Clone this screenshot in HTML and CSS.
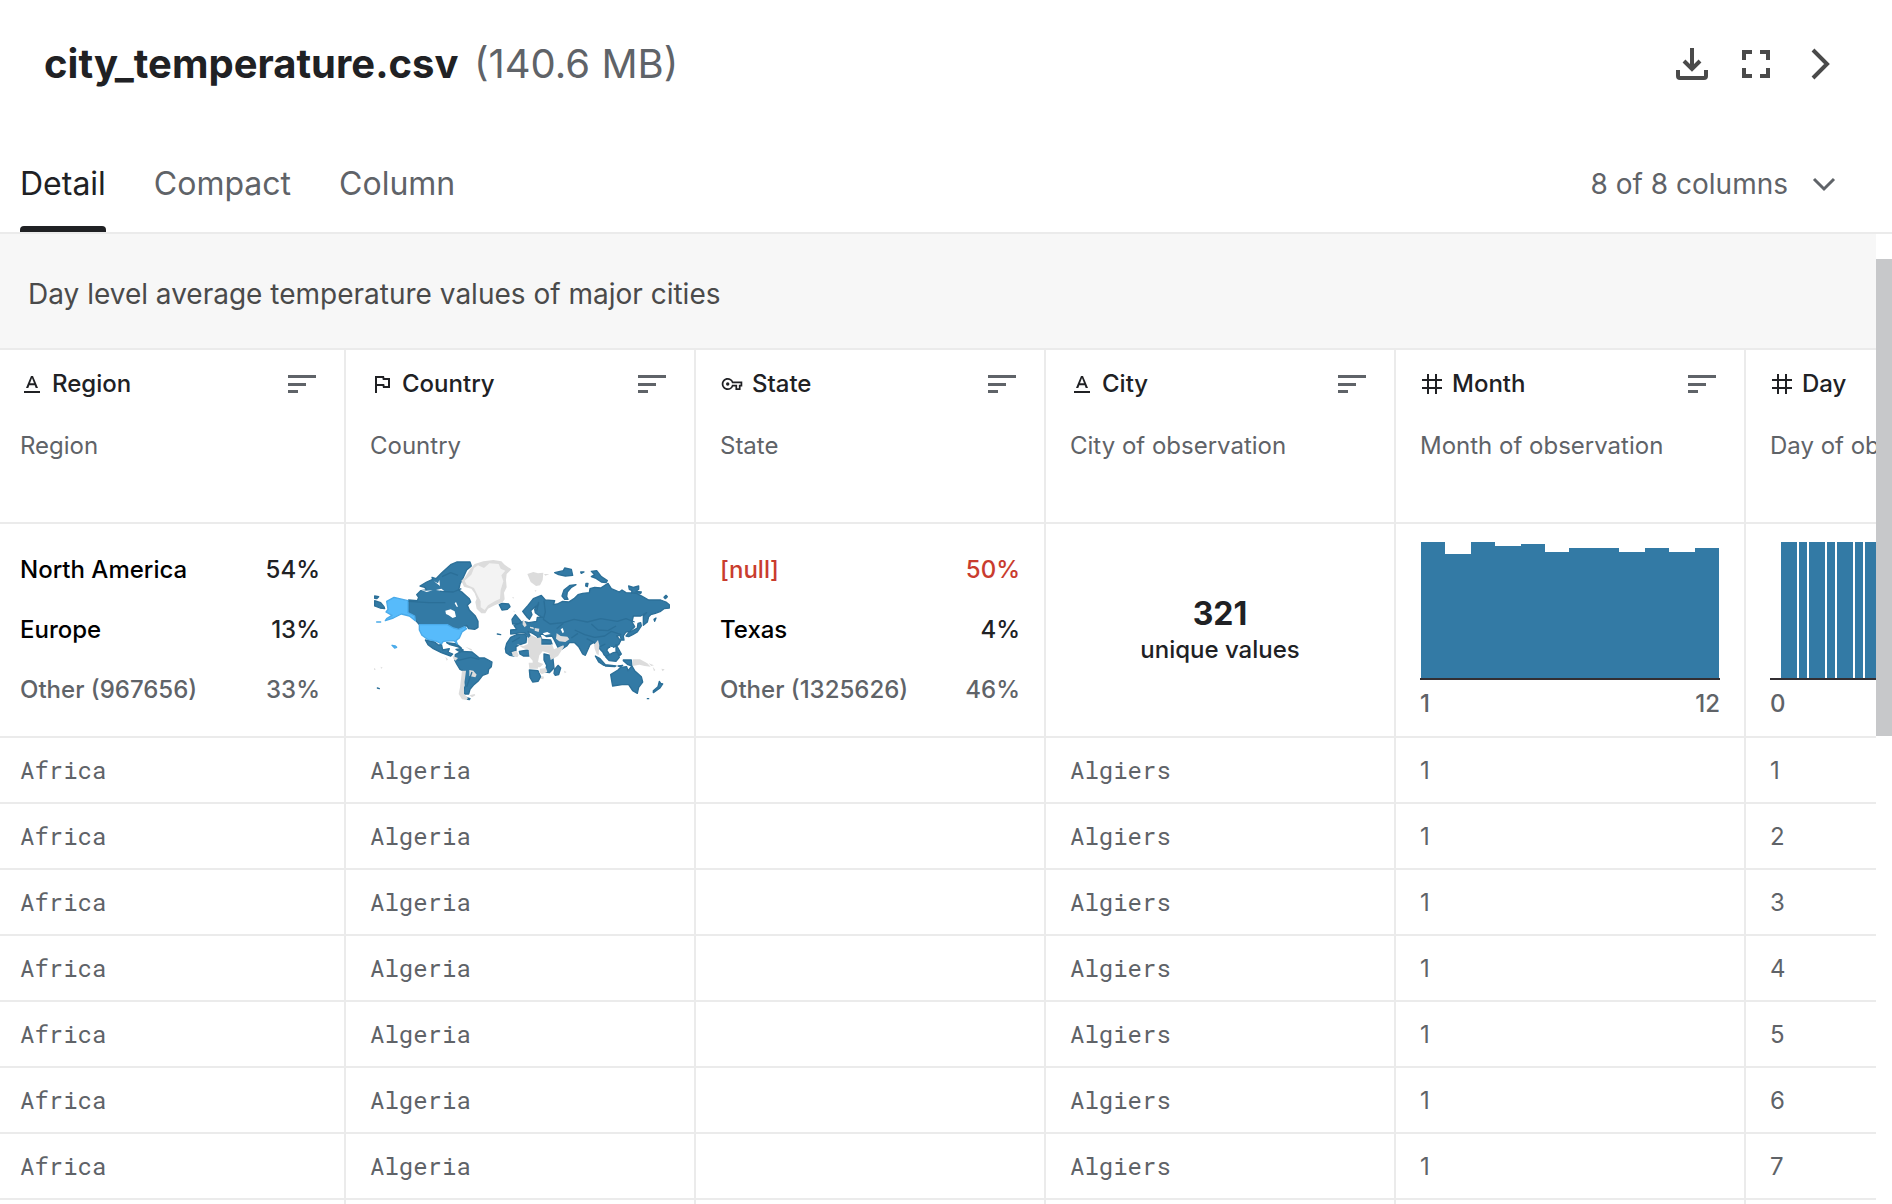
FILE: index.html
```html
<!DOCTYPE html>
<html lang="en">
<head>
<meta charset="utf-8">
<title>city_temperature.csv</title>
<link rel="stylesheet" href="styles.css">
</head>
<body>
<svg class="defs" aria-hidden="true">
  <symbol id="i-sort" viewBox="0 0 28 20"><path d="M0 1h28v3H0zM0 9h18v3H0zM0 16h10v3H0z"/></symbol>
  <symbol id="i-text" viewBox="0 0 24 24"><path d="M4 19h16v2H4zM6 16 11 4h2l5 12h-2.300l-1-2.800H9.300L8.300 16zM10 11.300h4L12 6z"/></symbol>
  <symbol id="i-flag" viewBox="0 0 24 24"><path d="M5 21V4h9l.4 2H20v10h-7l-.4-2H7v7zM14.600 14H18V8h-5.200l-.4-2H7v6h7.200z" fill-rule="evenodd"/></symbol>
  <symbol id="i-key" viewBox="-2 -2 28 28"><path d="M22 19h-6v-4h-2.680A6.990 6.990 0 0 1 7 19c-3.860 0-7-3.140-7-7s3.140-7 7-7c2.720 0 5.170 1.580 6.320 4H24v6h-2zm-4-2h2v-4h2v-2H11.940l-.23-.67A5.010 5.010 0 0 0 7 7c-2.760 0-5 2.240-5 5s2.240 5 5 5a5.010 5.010 0 0 0 4.710-3.330l.23-.67H18z" fill-rule="evenodd"/><circle cx="7" cy="12" r="2"/></symbol>
  <symbol id="i-hash" viewBox="0 0 24 24"><path d="M2 7h20v2H2zM2 15h20v2H2zM7 2h2v20H7zM15 2h2v20h-2z"/></symbol>
</svg>
<div class="viewer">
  <header class="top">
    <h1 class="title">city_temperature.csv <span class="size">(140.6 MB)</span></h1>
    <div class="actions">
      <button class="icon-btn" aria-label="Download"><svg width="32" height="32" viewBox="0 0 32 32"><path d="M16 0v22M8 13l8 8 8-8" fill="none" stroke="currentColor" stroke-width="4"/><path d="M2 22v6q0 2 2 2h24q2 0 2-2v-6" fill="none" stroke="currentColor" stroke-width="4"/></svg></button>
      <button class="icon-btn" aria-label="Full screen"><svg width="32" height="32" viewBox="0 0 32 32"><path d="M4 12V4h8M20 4h8v8M28 20v8h-8M12 28H4v-8" fill="none" stroke="currentColor" stroke-width="4"/></svg></button>
      <button class="icon-btn" aria-label="Next"><svg width="32" height="32" viewBox="0 0 32 32"><path d="M9 2l14 14L9 30" fill="none" stroke="currentColor" stroke-width="4"/></svg></button>
    </div>
  </header>
  <nav class="tabs">
    <button class="tab active">Detail</button>
    <button class="tab">Compact</button>
    <button class="tab">Column</button>
    <button class="columns">8 of 8 columns <svg width="24" height="16" viewBox="0 0 24 16"><path d="M2 3l10 10L22 3" fill="none" stroke="currentColor" stroke-width="3"/></svg></button>
  </nav>
  <main class="body">
    <div class="scroller">
      <p class="about">Day level average temperature values of major cities</p>
      <table class="grid">
        <colgroup><col class="first"><col><col><col><col><col></colgroup>
        <thead>
          <tr class="heads">
            <th scope="col"><div class="head"><svg class="type"><use href="#i-text"/></svg>Region<button class="sort" aria-label="Sort Region"><svg><use href="#i-sort"/></svg></button></div><p class="note">Region</p></th>
            <th scope="col"><div class="head"><svg class="type"><use href="#i-flag"/></svg>Country<button class="sort" aria-label="Sort Country"><svg><use href="#i-sort"/></svg></button></div><p class="note">Country</p></th>
            <th scope="col"><div class="head"><svg class="type"><use href="#i-key"/></svg>State<button class="sort" aria-label="Sort State"><svg><use href="#i-sort"/></svg></button></div><p class="note">State</p></th>
            <th scope="col"><div class="head"><svg class="type"><use href="#i-text"/></svg>City<button class="sort" aria-label="Sort City"><svg><use href="#i-sort"/></svg></button></div><p class="note">City of observation</p></th>
            <th scope="col"><div class="head"><svg class="type"><use href="#i-hash"/></svg>Month<button class="sort" aria-label="Sort Month"><svg><use href="#i-sort"/></svg></button></div><p class="note">Month of observation</p></th>
            <th scope="col"><div class="head"><svg class="type"><use href="#i-hash"/></svg>Day<button class="sort" aria-label="Sort Day"><svg><use href="#i-sort"/></svg></button></div><p class="note">Day of observation</p></th>
          </tr>
          <tr class="stats">
            <td><ul class="shares"><li><span>North America</span><b>54%</b></li><li><span>Europe</span><b>13%</b></li><li class="other"><span>Other (967656)</span><b>33%</b></li></ul></td>
            <td>
              <svg class="map" viewBox="30 48 900 444" role="img" aria-label="World map of countries">
                <g class="land">
                  <path d="M180 138L200 126 218 118 216 112 228 116 244 100 252 92 272 74 290 66 330 66 334 78 320 90 310 112 300 132 296 150 308 158 328 176 332 186 322 196 328 210 346 228 354 244 354 262 344 268 326 266 320 256 312 260 296 268 276 262 260 254H178L164 238 146 216V180L172 182 176 172 170 164 182 152 200 150 194 142z"/>
                  <path d="M44 182l18 6 10 12 2 6-14-2-16-6zM44 168l12 2-6 6-6-1zM418 194l8-4 20 2 4 8-8 8-16 2z"/>
                  <path d="M196 300l28 6 12 10 8-4 4 18 20-4-4 10 14 6-6 6-28-10-24-12-16-12zM260 308l30 4 14 12-12-4-22-6zM288 328l14-2 8 4-12 4z"/>
                  <path d="M286 344L304 334 336 336 358 354 374 354 396 366 394 380 386 388 384 400 368 406 354 424 340 436 330 448 326 462 314 462 310 456 316 436 312 412 314 394 300 388 290 372 284 360zM318 472l12 4-2 3-8-2z"/>
                  <path d="M436 326L440 310 452 292 470 284 494 282 500 290 498 308 480 314 468 320 468 332 450 336 462 348 450 346 438 338zM478 334l26-4 8 6-2 12-20 0-10-6zM544 298l28 2 4 12h-32zM552 342l26 6 4 36-14 14-12-2 4-20-8-16zM508 390l26 2 8 18-8 14-16 2-8-14zM584 388l10-12 8 8-6 20-10 2-4-6z"/>
                  <path d="M456 238l10-14 10 12 8 10-6 6-20 0z"/>
                  <path d="M488 214L504 196 520 176 544 166 556 180 584 182 580 194 592 192 608 184 626 186 642 176 654 164 668 160 688 158 690 146 704 142 722 144 744 130 754 146 778 156 786 150 798 158 830 160 848 170 866 180 902 180 918 186 928 194 928 204 912 206 902 214 886 220 872 224 866 230 862 246 850 256 850 228 860 218 842 228 820 228 816 246 824 260 810 274 798 276 790 288 792 300 784 300 780 286 770 288 782 302 776 314 760 322 746 322 740 330 750 346 740 352 732 344 728 336 720 328 714 314 700 308 690 314 676 346 668 342 656 320 644 308 628 308 620 318 604 328 594 322 582 298 576 288 560 290 548 282 540 284 546 300 538 300 530 288 518 280 504 274 512 292 506 292 494 278 484 278 470 280 452 282 452 270 470 268 462 256 478 250 490 244 506 248 530 244 532 232 548 232 536 226 526 218 524 208 536 192 524 202 512 212 516 224 508 238 500 230 494 222z"/>
                  <path d="M584 98l26-6 4-8 20 4 4 18-22 2-20-4zM662 96l10 0-8 4zM678 130l6 0-2 10-5-2zM694 94l16-2 14 18 18 12-4 6-14-2-18-12-12-4 10-6zM606 168l6-18 18-14 18-2-14 8-12 14-2 14 4 8-10 0zM806 138l14 4 16-4 0 10-8 6 16 2-2 4-28-2 2-6-8-4zM882 238l6-4-4 10zM912 172l6-6 4 4-6 6z"/>
                  <path d="M798 288l8-10 12-6 14-8 2-14 8-2 2 10-12 18-14 8-12 6zM706 348l14 8 16 18-4 2-16-10zM740 348l20-10 12-2 6 16-10 12-20-2-10-10zM768 314l6 10 10 18-4 4-12-12zM790 360l24 0 2 18-12-4-14-12zM736 374l32 4-4 2-28-2zM774 378l14-2-6 4z"/>
                  <path d="M752 404l22-14 8-8 18-2 4 12 12-14 8 14 20 18 4 16-12 16-4 18-14-8-12-18-20 0-28 4-2-10zM898 424l4 6 6 2-8 12-20 14 0-6 14-12zM862 476l4 0zM52 444l6 2zM412 282l10 2z"/>
                </g>
                <g class="none">
                  <path d="M304 122L316 110 330 88 344 72 370 64 400 60 424 64 434 74 454 88 440 102 438 120 440 142 432 158 434 178 428 186 404 196 384 206 376 220 364 220 350 206 346 186 350 176 344 160 334 146 312 140z"/>
                  <path class="ice" d="M314 122L334 104 342 84 354 76 372 84 388 70 416 72 422 86 436 92 424 106 430 124 422 150 420 176 404 184 384 196 374 210 362 202 362 184 352 164 342 144 320 134z"/>
                  <path d="M502 102L520 96 534 100 550 98 548 120 540 136 528 138 512 126zM552 102l16 0-12 5zM524 150l6 2-4 3zM488 240l6 4 6 12-6 6-6-8zM456 172l6 0-2 4zM460 212l5 1-3 3z"/>
                  <path d="M510 260l10 2 2 6-12-4zM524 264l14 2-2 10-12-4zM590 280l12 8 20 2 6 8-12 8-18-2-10-8z"/>
                  <path d="M470 312l20 6 14-6-2-16 12-10 18 8 12-2 0 24h28l4-4 6 16 28-12 2 4-18 28-22 12-4-20-20-6-10 12-4 20 16 6-10 10h-22v-20l-10-12-2-20-18-6zM456 336l14-4 6 14-4 6-14-4zM506 368h28v18h-26zM540 386l18-2 4 12-16 6-8-4zM544 408l8 2-2 8-8-2zM612 392l8 4-6 4z"/>
                  <path d="M702 314l12-14 4 16-2 30-6-4-6-16zM818 358l22 0 22 12 10 10-18-2-16-4-20 4zM866 370l16 6-8 2zM878 380l8 10-4 4zM904 386l10 2-6 6zM42 384l6 4-6 2zM62 380l6 3-5 3zM256 350l8 8-4 4z"/>
                  <path d="M306 392l12 0-2 16-4 30 0 24 12 12-4 6-14-2-10-16 4-20zM328 390l12 2 10 12-4 8-18-4zM328 466l16-4 2 4-10 6zM278 348l16 6-8 8-6-6zM316 320l20 8-2 4z"/>
                </g>
                <g class="usa">
                  <path d="M80 184L102 172 144 182V218L164 228 166 242 148 228 124 222 100 234 76 242 80 236 96 226 78 216 84 208z"/>
                  <path d="M178 254H262L280 264 296 268 314 260 320 266 306 276 298 294 288 302 292 312 282 302 250 304 244 312 230 304 202 298 186 286 178 270zM96 316l10 2 4 4-6 2zM50 246l12 0z"/>
                </g>
                <g class="water">
                  <path d="M256 212l16-4 12 6 4 16-10 4-12-8-8-4zM178 148l20 4 20-1-18 5zM284 190l4-4 6 14-4 0zM228 150l16-4 10 8-12-2zM222 124l18 14-2-18-4 10zM548 280l14-4 10 6-18 4zM602 268l6-4 4 12-4 4zM750 320l10 2-6 8z"/>
                </g>
                <path class="borders" d="M146 184l60 4 50 0M240 154l40 2 24-10M246 110l26-12 22 8M552 182l4 34-6 22 20 14 40-4 32-10 40 8 40-10 50 8 26-8 26 10M536 186l-6 28M610 250l-20 16M644 270l30 14 30 8 30-4 20-14 30 10M694 252l20 18 30 2 24-14M634 294l20-14M680 296l24 12M292 362l40-10 26 6M336 396l-16 44M456 306l24-14M720 320l16-8"/>
              </svg>
            </td>
            <td><ul class="shares"><li class="null"><span>[null]</span><b>50%</b></li><li><span>Texas</span><b>4%</b></li><li class="other"><span>Other (1325626)</span><b>46%</b></li></ul></td>
            <td><p class="unique"><strong>321</strong>unique values</p></td>
            <td><svg class="chart" viewBox="0 0 300 138" role="img" aria-label="Month histogram"><path class="bars" d="M1 136V0h24v12h26V0h24v4h26V2h24v8h24V6h50v4h26V6h24v4h26V6h24v130z"/><path class="axis" d="M0 136h300v2H0z"/></svg><p class="range"><span>1</span><span>12</span></p></td>
            <td><svg class="chart" viewBox="0 0 300 138" role="img" aria-label="Day histogram"><path class="bars" d="M11 0h16v136H11zM29 0h8v136h-8zM39 0h16v136H39zM57 0h8v136h-8zM67 0h16v136H67zM85 0h8v136h-8zM95 0h16v136H95zM113 0h8v136h-8zM123 0h16v136h-16z"/><path class="axis" d="M0 136h300v2H0z"/></svg><p class="range"><span>0</span></p></td>
          </tr>
        </thead>
        <tbody>
          <tr><td>Africa</td><td>Algeria</td><td></td><td>Algiers</td><td class="num">1</td><td class="num">1</td></tr>
          <tr><td>Africa</td><td>Algeria</td><td></td><td>Algiers</td><td class="num">1</td><td class="num">2</td></tr>
          <tr><td>Africa</td><td>Algeria</td><td></td><td>Algiers</td><td class="num">1</td><td class="num">3</td></tr>
          <tr><td>Africa</td><td>Algeria</td><td></td><td>Algiers</td><td class="num">1</td><td class="num">4</td></tr>
          <tr><td>Africa</td><td>Algeria</td><td></td><td>Algiers</td><td class="num">1</td><td class="num">5</td></tr>
          <tr><td>Africa</td><td>Algeria</td><td></td><td>Algiers</td><td class="num">1</td><td class="num">6</td></tr>
          <tr><td>Africa</td><td>Algeria</td><td></td><td>Algiers</td><td class="num">1</td><td class="num">7</td></tr>
          <tr><td></td><td></td><td></td><td></td><td></td><td></td></tr>
        </tbody>
      </table>
    </div>
    <div class="track"><div class="thumb"></div></div>
  </main>
</div>
</body>
</html>
```
FILE: styles.css
```css
* { box-sizing: border-box; }
body { margin: 0; font-family: Inter, sans-serif; color: #202124; background: #fff; }
h1, p, ul { margin: 0; padding: 0; }
button { margin: 0; padding: 0; border: 0; background: none; font: inherit; color: inherit; }
svg { display: block; fill: currentColor; }
.defs { position: absolute; width: 0; height: 0; }

.viewer { display: flex; flex-direction: column; height: 100vh; overflow: hidden; }

.top { flex: none; display: flex; justify-content: space-between; align-items: center; height: 128px; padding: 0 56px 0 44px; }
.title { font-size: 40px; line-height: 48px; font-weight: 700; }
.size { margin-left: 6px; font-weight: 400; color: #5f6368; }
.actions { display: flex; gap: 32px; color: #4a4a4a; }

.tabs { flex: none; display: flex; align-items: stretch; gap: 48px; height: 106px; padding: 0 56px 0 20px; border-bottom: 2px solid #ebebeb; color: #5f6368; }
.tab { position: relative; padding-top: 8px; font-size: 32px; line-height: 40px; }
.tab.active { color: #202124; }
.tab.active::after { content: ""; position: absolute; left: 0; right: 0; bottom: 0; height: 6px; border-radius: 4px 4px 0 0; background: #202124; }
.columns { display: flex; align-items: center; gap: 24px; margin-left: auto; padding-top: 8px; font-size: 28px; }

.body { flex: 1; display: flex; min-height: 0; }
.scroller { flex: 1; min-width: 0; overflow: hidden; }
.about { padding: 43px 28px 37px; font-size: 28px; line-height: 34px; color: #4a4a4a; background: #f7f7f7; }
.track { flex: none; width: 16px; padding-top: 25px; }
.thumb { height: 477px; background: #c7c8ca; }

.grid { width: 2096px; table-layout: fixed; border-collapse: separate; border-spacing: 0; border-top: 2px solid #ebebeb; }
.grid col { width: 350px; }
.grid col.first { width: 346px; }
.grid th, .grid td { padding: 0 24px; border-right: 2px solid #ebebeb; border-bottom: 2px solid #ebebeb; text-align: left; font-weight: 400; vertical-align: middle; }
.grid tr > :first-child { padding-left: 20px; }

.heads th { height: 174px; padding-top: 18px; vertical-align: top; font-size: 24px; line-height: 32px; }
.head { display: flex; align-items: center; gap: 8px; font-weight: 500; }
.type { width: 24px; height: 24px; }
.sort { margin-left: auto; padding-right: 4px; color: #5f6368; }
.sort svg { width: 28px; height: 20px; }
.note { margin-top: 30px; color: #5f6368; white-space: nowrap; overflow: hidden; }

.stats td { height: 214px; font-size: 24px; }
.shares { list-style: none; font-weight: 500; line-height: 60px; color: #000; }
.shares li { display: flex; justify-content: space-between; }
.shares b { font-weight: 500; color: #202124; }
.shares .other, .shares .other b { color: #5f6368; }
.shares .null, .shares .null b { color: #c93c2e; }
.map { width: 300px; height: 148px; }
.none { fill: #dcdcdc; }
.ice { fill: #f3f3f3; }
.land { fill: #337aa5; stroke: #2b6f98; stroke-width: 4; stroke-linejoin: round; }
.usa { fill: #57bbfb; stroke: #4aaae9; stroke-width: 4; stroke-linejoin: round; }
.water { fill: #fff; }
.borders { fill: none; stroke: #2b6f98; stroke-width: 4; stroke-linejoin: round; }
.unique { text-align: center; font-weight: 500; line-height: 32px; }
.unique strong { display: block; font-size: 32px; line-height: 40px; font-weight: 700; }
.chart { width: 300px; height: 138px; }
.bars { fill: #337aa5; }
.axis { fill: #332f33; }
.grid .stats td:has(.chart) { padding-top: 2px; }
.range { display: flex; justify-content: space-between; padding-top: 8px; line-height: 32px; font-weight: 500; color: #5f6368; }

tbody td { height: 66px; font-family: "Roboto Mono", "Liberation Mono", monospace; font-size: 24px; color: #5f6368; }
tbody td.num { font-family: Inter, sans-serif; }
```
